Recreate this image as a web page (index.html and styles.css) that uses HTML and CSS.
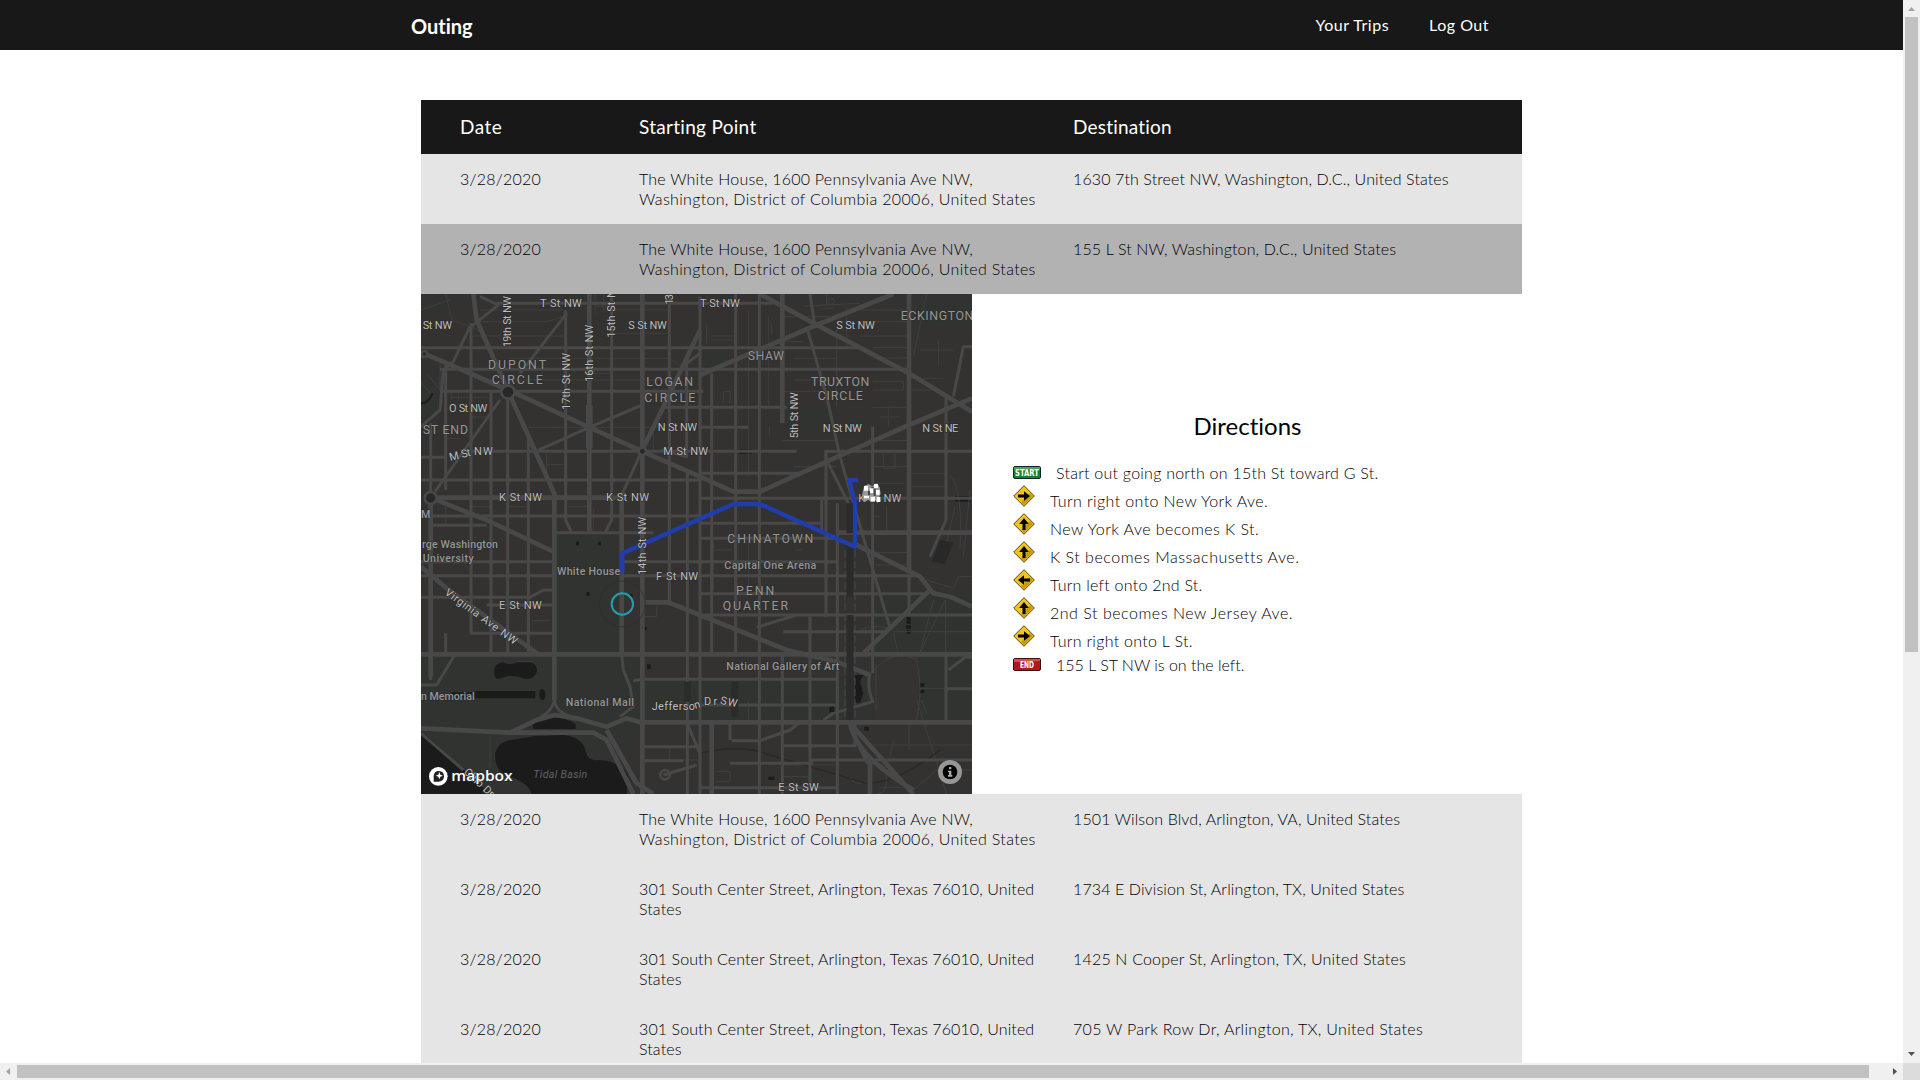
FILE: index.html
```html
<!DOCTYPE html>
<html lang="en">
<head>
<meta charset="utf-8">
<title>Outing</title>
<link rel="stylesheet" href="styles.css">
</head>
<body>
<div class="window">
<div class="viewport">
<header class="topbar">
  <a class="brand">Outing</a>
  <nav class="nav"><a class="nav-trips">Your Trips</a><a class="nav-logout">Log Out</a></nav>
</header>
<main class="trips">
  <div class="row row-head"><div class="h-date">Date</div><div class="h-start">Starting Point</div><div class="h-dest">Destination</div></div>
  <div class="row"><div class="date">3/28/2020</div><div class="from"><span class="wh1">The White House, 1600 Pennsylvania Ave NW,</span><br><span class="wh2">Washington, District of Columbia 20006, United States</span></div><div class="to d1">1630 7th Street NW, Washington, D.C., United States</div></div>
  <div class="row row-active"><div class="date">3/28/2020</div><div class="from"><span class="wh1">The White House, 1600 Pennsylvania Ave NW,</span><br><span class="wh2">Washington, District of Columbia 20006, United States</span></div><div class="to d2">155 L St NW, Washington, D.C., United States</div></div>
  <section class="detail">
    <svg class="map" viewBox="3 12 1653 1500" preserveAspectRatio="none">
      <rect x="3" y="12" width="1653" height="1500" fill="#333231"/>
      <!-- parks -->
      <g fill="#303330">
        <path d="M403 728H605V1093H403zM3 1093H665V1297L560 1512H3zM665 1165H1340V1297H665zM1340 975L1400 900H1656V1297H1290V1093H1340z"/>
        <path d="M3 12H70V60L20 85H3zM3 240L50 300L40 390L3 400zM840 180H910V230L840 250zM1090 360H1230V410H1100zM720 270H780V330H730zM1500 12H1656V120H1490z"/>
      </g>
      <path d="M1353 1140Q1420 1085 1490 1115Q1520 1200 1490 1290H1360z" fill="#353332"/>
      <!-- water -->
      <g fill="#1b1b1b">
        <path d="M3 1325L35 1350L210 1512H3zM225 1390Q235 1350 290 1348L345 1338L430 1335Q480 1340 495 1375Q500 1415 535 1410Q610 1415 625 1460L620 1512H335Q325 1475 255 1455Q225 1440 225 1390zM338 1305Q400 1260 467 1302V1317H340zM222 1145Q222 1120 250 1117Q270 1130 300 1114Q350 1110 351 1142Q347 1168 315 1167Q290 1155 260 1158Q223 1180 222 1145zM165 1203H346V1225H165zM358 1213Q359 1195 367 1197Q376 1200 376 1214Q375 1230 367 1230Q358 1230 358 1213z"/>
        <path d="M95 1207H165V1223H95zM468 755h9v11h-9zM534 755h9v11h-9zM499 907h10v10h-10zM629 912h9v8h-9zM673 1010h7v10h-7zM681 1123h11v15h-11zM1460 980h12v22h-12zM1458 1006h15v10h-15zM1460 1020h12v11h-12zM1499 1180h14v10h-14zM1499 1200h14v9h-14zM1305 1155h25l-10 20 10 35-10 28h-15zM1228 1248h14v18h-14zM1333 1310h14v12h-14zM1045 1460h18v10h-18zM958 478h38v13h-38zM1606 618h45v17h-45z"/>
      </g>
      <!-- alleys and small streets -->
      <g fill="none" stroke="#403f3f" stroke-width="3">
        <path d="M60 215V304M95 330V305M115 330V310M90 322H205M180 60H430M180 95H380L430 80M153 138H430M270 205H575M270 270H575M153 381H213M77 445H120M380 484V570M380 524H430M400 412H730M325 412H430M77 630V706M525 12V70M550 12V70M525 48H575M500 250H570M575 60H748M575 130H748M575 205H748M575 270H748M667 270V450M700 412V484M748 205L800 240M340 1115H290M335 992H390M675 980H710V950M77 12L95 90L180 120M3 60L90 30M20 250L70 310M3 275L30 310M153 650H213M263 650H325M437 650H508M520 655V725"/>
        <path d="M860 100V160M875 150H947M875 138H947M985 60V560M1045 80V350M1055 100V135M1087 80H1230M1087 155H1150M1120 205H1250M1120 270H1230M1087 304H1200M1087 452H1250M1120 530H1250M910 340V305H930V340M1048 410V440M1250 110V350M1280 50V170M1220 12V48M1210 55H1240M1150 48L1320 40M1320 60H1467M1320 95H1467M1320 138H1467M1358 173H1467M1358 204H1467M1358 300H1450V275H1358M1358 352H1467M1358 452H1467M1390 490V535H1425V490M1405 350V410M1380 381H1440M1358 530H1467M1358 580H1450M1358 680H1382M1480 200L1520 12M1555 150V230M1500 180H1600M1467 265H1570M1467 300H1560M1467 550H1578M1467 590H1578M1590 555Q1630 600 1620 780M1605 650L1570 800M1650 600L1630 800M1400 650V728"/>
        <path d="M880 780H935M880 755V900M985 750V900M1125 780H1145M1095 815H1218M1368 788H1467M1368 825H1467M1520 870L1600 895L1615 860H1656M1575 930L1490 1110M1540 930L1500 1090M1577 930V1093M1420 1025H1656M1420 1030L1435 1090M1320 1018Q1380 1000 1420 1020M1353 1150Q1420 1070 1490 1110Q1510 1200 1490 1290M1490 1230L1580 1512M1368 1120V1260M1500 1195H1578M1505 1230L1520 1270M1358 1365H1656M1410 1400L1420 1350M1467 1300V1380M1480 1500L1550 1440H1656M1380 1492H1480M890 1445H930V1475H890M1090 1460H1170M1090 1425H1250M985 1230V1300M748 1370V1410M665 1410H840M210 1340V1440"/>
        <ellipse cx="1233" cy="34" rx="10" ry="9"/><path d="M1340 1440Q1390 1390 1400 1460Q1400 1512 1370 1512M1290 1460Q1300 1490 1340 1475"/>
      </g>
      <path d="M840 1390Q960 1360 1050 1395L1340 1480Q1430 1480 1560 1380" fill="none" stroke="#292929" stroke-width="4"/>
      <!-- streets -->
      <g fill="none" stroke="#484848" stroke-width="9" stroke-linejoin="round">
        <path d="M77 215V600M32 400V1170M153 100V1030M213 300V1090M263 305V1090M325 440V1090M437 60V690L455 728M575 12V690L555 728M748 12V940M802 550V1512M840 20V1512M875 250V1090M947 12V1090M1018 12V1512M1170 980V1490M1218 480V980M1252 640V1512M1205 620V720M1358 410V1150M1578 320V690L1530 800M1578 1093V1290M1087 1090V1512M930 1297V1350M77 1030V1090M1305 1300V1365"/>
        <path d="M230 40H1060M3 173H1320M60 238H1467M60 304H850M730 352H1100M140 484H1130M3 502H77M3 570H840M840 550H1140M840 412H985M840 625H1656M3 678H840M32 706H200M400 728H700M840 700H1200M840 745H1250M3 815H400M3 857H400M605 815H1250M605 857H1500M840 911H1510M840 975H1656M3 922H330L370 900H403M200 945H400M150 1030H400M640 1172L665 1168H1250M840 1245H1250M665 1370H840M665 1412H790M935 1352H1020L1110 1320L1140 1297M1087 1367H1310M1170 1410H1656M930 1420H1180M840 1493H1250M1218 484V515M1218 484H1320M1318 484H1656M1090 1025H1400M1010 1012L1130 975M1578 1196H1656M1585 1140L1635 1102H1656M1467 860V980"/>
        <path d="M45 605L240 330M150 110L100 215L70 240L60 360L3 410M440 70L300 250M345 485L508 412L667 345M180 20L235 45L153 110M340 12M1170 12L1185 110M1160 110L1220 320L1260 500L1350 810L1412 1020M1225 520L1290 650M665 484L605 615M725 480L800 500V220L840 190M1350 1150Q1340 1190 1358 1235L1240 1270L1210 1290M1656 170H1630L1600 320M105 1093L50 1185H3M605 1093L610 1140L630 1190L640 1250L600 1280M3 1330L130 1440M403 1093V1230Q395 1270 345 1290M403 1230Q410 1270 455 1280M800 1297L840 1390M730 1455L830 1425"/>
        <circle cx="735" cy="1454" r="14" stroke-width="8"/>
      </g>
      <!-- avenues -->
      <g fill="none" stroke="#484848" stroke-width="14" stroke-linejoin="round">
        <path d="M508 12V725M667 12V1512M605 615V1093M403 610V1230M32 640V1160M1087 12V400M1467 12V850M30 623H620M1250 728H1656M3 1093H1656M655 1297H1656M875 1297V1512M160 12L170 90L265 305L405 615"/>
        <path d="M12 190L265 300L508 412L667 484L840 560L940 605H1020L1220 515L1467 405L1656 325M665 484L745 320L840 120M32 623L200 690L400 785M840 255L1190 105L1420 12M1020 12L1200 110L1467 250L1656 365M1300 760L1500 860L1540 910L1590 920L1656 950M665 937H745L840 975L1100 1080L1250 1115L1350 1155M1330 1090L1530 900M1290 1300L1480 1512M1290 1300Q1310 1400 1480 1500M3 830L80 895L355 1093M3 1315L270 1328H520L560 1350L640 1512M270 1328L350 1290L405 1275L470 1285L560 1310L620 1285L660 1297M560 1320L650 1480L700 1512M1350 1400V1512M1320 1370L1345 1420"/>
      </g>
      <path d="M508 345V475M498 412H525" stroke="#484848" stroke-width="20"/>
      <path d="M1290 640V730M1290 765V920M1290 975V1290M945 1175V1280M802 1175V1235" stroke="#2a2b2a" stroke-width="20"/>
      <path d="M1275 780V1290M1305 780V1290" stroke="#484848" stroke-width="3" stroke-dasharray="22 10"/>
      <g fill="#272928" stroke="#484848" stroke-width="8"><circle cx="264" cy="306" r="20"/><circle cx="32" cy="624" r="18"/><circle cx="667" cy="484" r="11"/><circle cx="13" cy="192" r="9"/></g>
      <path d="M3 340Q25 340 38 310" stroke="#1b1b1b" stroke-width="6" fill="none"/>
      <path d="M1560 750l40 8-25 65-40-8z" fill="#282828"/>
      <!-- route under the labels -->
      <path d="M607 847V790L940 642H1020L1305 770V640L1288 570H1314" fill="none" stroke="#203db0" stroke-width="13" stroke-linejoin="round"/>
      <circle cx="607" cy="942" r="69" fill="none" stroke="#2b2d2c" stroke-width="2"/>
      <circle cx="607" cy="942" r="32" fill="none" stroke="#249db0" stroke-width="6"/>
      <!-- map labels -->
      <g class="street">
        <text x="8" y="117" textLength="88">St NW</text><text x="360" y="52" textLength="125">T St NW</text><text x="625" y="117" textLength="115">S St NW</text><text x="840" y="52" textLength="119">T St NW</text>
        <text x="87" y="365" textLength="115">O St NW</text><text transform="translate(91 513)rotate(-14)" textLength="65">M St</text><text x="162" y="496" textLength="56">NW</text><text x="713" y="424" textLength="118">N St NW</text><text x="730" y="496" textLength="134">M St NW</text><text x="237" y="632" textLength="129">K St NW</text><text x="558" y="632" textLength="129">K St NW</text>
        <text transform="translate(274 172)rotate(-90)" textLength="154">19th St NW</text><text transform="translate(449 360)rotate(-90)" textLength="171">17th St NW</text><text transform="translate(518 276)rotate(-90)" textLength="172">16th St NW</text><text transform="translate(586 143)rotate(-90)" textLength="172">15th St NW</text><text transform="translate(758 44)rotate(-90)" textLength="32">13</text><text transform="translate(677 855)rotate(-90)" textLength="175">14th St NW</text><text transform="translate(1133 445)rotate(-90)" textLength="138">5th St NW</text>
        <text x="1249" y="118" textLength="115">S St NW</text><text x="1208" y="425" textLength="117">N St NW</text><text x="1507" y="425" textLength="108">N St NE</text><text x="1315" y="637" textLength="129">K St NW</text><text x="708" y="869" textLength="126">F St NW</text><text x="237" y="957" textLength="128">E St NW</text><text x="1075" y="1502" textLength="121">E St SW</text>
        <text transform="translate(72 912)rotate(36)" textLength="260">Virginia Ave NW</text><text x="695" y="1260" textLength="130">Jefferso</text><text transform="translate(826 1257)rotate(-16)">n</text><text x="852" y="1244" textLength="40">Dr</text><text transform="translate(899 1241)rotate(12)" textLength="52">SW</text><text transform="translate(130 1448)rotate(43)" textLength="110">Ohio Dr</text>
      </g>
      <g class="place">
        <text x="6" y="773" textLength="228">rge Washington</text><text x="8" y="816" textLength="153">University</text><text x="411" y="854" textLength="190">White House</text><text x="3" y="1231" textLength="161">n Memorial</text><text x="437" y="1247" textLength="205">National Mall</text><text x="913" y="837" textLength="276">Capital One Arena</text><text x="919" y="1140" textLength="339">National Gallery of Art</text><text x="3" y="683">M</text><text class="basin" x="340" y="1464" textLength="162">Tidal Basin</text>
      </g>
      <g class="area">
        <text x="204" y="236" textLength="174">DUPONT</text><text x="215" y="282" textLength="153">CIRCLE</text><text x="679" y="289" textLength="140">LOGAN</text><text x="673" y="335" textLength="153">CIRCLE</text><text x="983" y="209" textLength="109">SHAW</text><text x="1173" y="288" textLength="175">TRUXTON</text><text x="1193" y="331" textLength="135">CIRCLE</text><text x="1442" y="91" textLength="218">ECKINGTON</text><text x="8" y="433" textLength="136">ST END</text><text x="922" y="760" textLength="258">CHINATOWN</text><text x="948" y="914" textLength="115">PENN</text><text x="908" y="960" textLength="196">QUARTER</text>
      </g>
      <!-- checkered destination flag -->
      <g><path d="M1332 588l14-6 10 7 15-9 8 12 3 20-5 9 5 12-10 5-8-10-11 8-8-7-12 8-7-20z" fill="#999"/><path d="M1332 588h12v14h-12zM1349 595h11v14h-11zM1332 617h15v8h-15zM1352 620h13v14h-13zM1362 582h12v12h-12zM1368 600h11v14h-11zM1370 621h11v15h-11z" fill="#fff"/><path d="M1344 602h6v14h-6zM1361 596h6v22h-6zM1354 590h7v5h-7z" fill="#444"/></g>
      <!-- map provider badge -->
      <circle cx="55" cy="1459" r="28" fill="#fff"/><path d="M41 1475V1459Q42 1443 57 1443Q72 1444 72 1459Q71 1475 55 1475z" fill="#222"/><path d="M58 1446l3 8 8 3-8 3-3 8-3-8-8-3 8-3z" fill="#fff"/>
      <text class="mapbox" x="94" y="1472" textLength="184" lengthAdjust="spacingAndGlyphs">mapbox</text>
      <circle cx="1590" cy="1446" r="36" fill="#969696"/><circle cx="1590" cy="1446" r="22" fill="#000"/><path d="M1587 1431h7v7h-7zM1584 1442h10v13h3v5h-13v-5h3v-8h-3z" fill="#aaa"/>
    </svg>
    <div class="directions">
      <h2>Directions</h2>
      <ol>
        <li class="edge s0"><svg class="plate" viewBox="0 0 28 13"><rect x=".5" y=".5" width="27" height="12" rx="1.5" fill="#17832a" stroke="#123"/><path d="M1 4V1h26v2z" fill="#48a455"/><text x="14" y="9.5" textLength="24" lengthAdjust="spacingAndGlyphs">START</text></svg><span>Start out going north on 15th St toward G St.</span></li>
        <li class="s1"><svg class="sign" viewBox="0 0 22 22"><path d="M11 .7L21.3 11 11 21.3.7 11z" fill="#efc51d" stroke="#554615"/><path d="M11 20L20 11 17 8 8 17z" fill="#c69c0e"/><path d="M5 9.5h6V6.2L17 11l-6 4.8v-3.3H5z"/></svg><span>Turn right onto New York Ave.</span></li>
        <li class="s2"><svg class="sign" viewBox="0 0 22 22"><path d="M11 .7L21.3 11 11 21.3.7 11z" fill="#efc51d" stroke="#554615"/><path d="M11 20L20 11 17 8 8 17z" fill="#c69c0e"/><path d="M9.5 17v-6H6.2L11 5l4.8 6h-3.3v6z"/></svg><span>New York Ave becomes K St.</span></li>
        <li class="s3"><svg class="sign" viewBox="0 0 22 22"><path d="M11 .7L21.3 11 11 21.3.7 11z" fill="#efc51d" stroke="#554615"/><path d="M11 20L20 11 17 8 8 17z" fill="#c69c0e"/><path d="M9.5 17v-6H6.2L11 5l4.8 6h-3.3v6z"/></svg><span>K St becomes Massachusetts Ave.</span></li>
        <li class="s4"><svg class="sign" viewBox="0 0 22 22"><path d="M11 .7L21.3 11 11 21.3.7 11z" fill="#efc51d" stroke="#554615"/><path d="M11 20L20 11 17 8 8 17z" fill="#c69c0e"/><path d="M17 9.5h-6V6.2L5 11l6 4.8v-3.3h6z"/></svg><span>Turn left onto 2nd St.</span></li>
        <li class="s5"><svg class="sign" viewBox="0 0 22 22"><path d="M11 .7L21.3 11 11 21.3.7 11z" fill="#efc51d" stroke="#554615"/><path d="M11 20L20 11 17 8 8 17z" fill="#c69c0e"/><path d="M9.5 17v-6H6.2L11 5l4.8 6h-3.3v6z"/></svg><span>2nd St becomes New Jersey Ave.</span></li>
        <li class="s6"><svg class="sign" viewBox="0 0 22 22"><path d="M11 .7L21.3 11 11 21.3.7 11z" fill="#efc51d" stroke="#554615"/><path d="M11 20L20 11 17 8 8 17z" fill="#c69c0e"/><path d="M5 9.5h6V6.2L17 11l-6 4.8v-3.3H5z"/></svg><span>Turn right onto L St.</span></li>
        <li class="edge s7"><svg class="plate" viewBox="0 0 28 13"><rect x=".5" y=".5" width="27" height="12" rx="1.5" fill="#b5151b" stroke="#311"/><path d="M1 4V1h26v2z" fill="#cf5355"/><text x="14" y="9.5" textLength="14" lengthAdjust="spacingAndGlyphs">END</text></svg><span>155 L ST NW is on the left.</span></li>
      </ol>
    </div>
  </section>
  <div class="row"><div class="date">3/28/2020</div><div class="from"><span class="wh1">The White House, 1600 Pennsylvania Ave NW,</span><br><span class="wh2">Washington, District of Columbia 20006, United States</span></div><div class="to d3">1501 Wilson Blvd, Arlington, VA, United States</div></div>
  <div class="row"><div class="date">3/28/2020</div><div class="from tx">301 South Center Street, Arlington, Texas 76010, United<br>States</div><div class="to d4">1734 E Division St, Arlington, TX, United States</div></div>
  <div class="row"><div class="date">3/28/2020</div><div class="from tx">301 South Center Street, Arlington, Texas 76010, United<br>States</div><div class="to d5">1425 N Cooper St, Arlington, TX, United States</div></div>
  <div class="row"><div class="date">3/28/2020</div><div class="from tx">301 South Center Street, Arlington, Texas 76010, United<br>States</div><div class="to d6">705 W Park Row Dr, Arlington, TX, United States</div></div>
</main>
</div>
<div class="vbar"><svg viewBox="0 0 17 17"><path d="M5 11h7L8.5 7z" fill="#a3a3a3"/></svg><div class="vthumb"></div><svg class="last" viewBox="0 0 17 17"><path d="M5 6h7L8.5 10z" fill="#505050"/></svg></div>
<div class="hbar"><svg viewBox="0 0 17 17"><path d="M10 5v7L6 8.5z" fill="#a3a3a3"/></svg><div class="hthumb"></div><svg class="last" viewBox="0 0 17 17"><path d="M7 5v7l4-3.5z" fill="#505050"/></svg></div>
<div class="corner"></div>
</div>
</body>
</html>
```
FILE: styles.css
```css
* { box-sizing: border-box; }
body { margin: 0; overflow: hidden; background: #fff; color: #000; font: 300 16px/20px Lato, "Open Sans", sans-serif; font-variant-ligatures: none; }
.window { display: grid; grid-template: 1063px 17px / 1903px 17px; width: 1920px; height: 1080px; }
.viewport { overflow: hidden; }
.topbar { display: flex; justify-content: space-between; align-items: center; height: 50px; padding: 0 414px 0 411px; background: #181818; color: #fff; }
.brand { font-size: 20px; font-weight: 700; line-height: 24px; padding-top: 1px; }
.nav { display: flex; gap: 40px; font-weight: 400; letter-spacing: .5px; }
.trips { width: 1101px; margin: 50px 0 0 421px; }
.row { display: grid; grid-template-columns: 179px 434px 1fr; height: 70px; padding: 15px 0 0 39px; background: #e5e5e5; white-space: nowrap; }
.row-head { height: 54px; padding-top: 17px; background: #181818; color: #fff; font-size: 19px; font-weight: 400; }
.row-active { background: #b2b2b2; }
.date { letter-spacing: .25px; }
.h-date { letter-spacing: .5px; }
.h-start { letter-spacing: .3px; }
.h-dest { letter-spacing: .2px; }
.wh1 { letter-spacing: .22px; }
.wh2 { letter-spacing: .33px; }
.tx { letter-spacing: .1px; }
.d1, .d3, .d4 { letter-spacing: .11px; }
.d2 { letter-spacing: .13px; }
.d5 { letter-spacing: .18px; }
.d6 { letter-spacing: .31px; }
.detail { display: grid; grid-template-columns: 551px 1fr; height: 500px; }
.map { display: block; width: 551px; height: 500px; overflow: hidden; font-family: Roboto, sans-serif; }
.map text { font-size: 34px; paint-order: stroke; stroke: #292929; stroke-width: 3px; fill: #bdbdbd; }
.map .street text { font-size: 33px; font-weight: 400; word-spacing: 2px; }
.map .place text { fill: #969696; font-weight: 500; font-size: 32px; }
.map .area text { fill: #969696; font-weight: 400; font-size: 37px; stroke-width: 2px; }
.map .place .basin { fill: #626262; font-style: italic; font-weight: 400; stroke: none; }
.map .mapbox { font: 600 42px "Open Sans", sans-serif; fill: #fff; }
.directions { padding: 117px 0 0 41px; }
h2 { margin: 0; width: 469px; color: #000; font-size: 24px; font-weight: 400; line-height: 30px; text-align: center; }
ol { list-style: none; margin: 18px 0 0; padding: 0; }
li { display: flex; align-items: flex-end; gap: 15px; height: 28px; white-space: nowrap; }
.edge { height: 24px; }
.s0 { letter-spacing: .24px; }
.s1 { letter-spacing: .4px; }
.s2 { letter-spacing: .44px; }
.s3, .s5 { letter-spacing: .52px; }
.s4 { letter-spacing: .25px; }
.s6 { letter-spacing: .29px; }
.sign { width: 22px; height: 22px; margin-bottom: 4px; }
.plate { width: 28px; height: 13px; margin-bottom: 4px; }
.plate text { fill: #fff; font: 700 8px "DejaVu Sans", sans-serif; text-anchor: middle; letter-spacing: 0; }
.vbar, .hbar { display: flex; background: #f0f0f0; }
.vbar { flex-direction: column; }
.vbar svg, .hbar svg { width: 17px; height: 17px; flex: none; }
.vthumb { height: 635px; margin: 0 2px; background: #c1c1c1; }
.hthumb { width: 1852px; margin: 2px 0; background: #c1c1c1; }
.vbar .last { margin-top: auto; }
.hbar .last { margin-left: auto; }
.corner { background: #dcdcdc; }
```
